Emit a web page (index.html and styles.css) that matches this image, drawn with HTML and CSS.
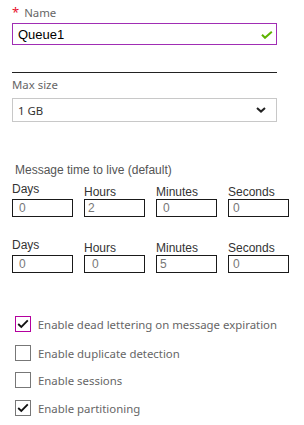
FILE: index.html
```html
<!DOCTYPE html>
<html>
<head>
<meta charset="utf-8">
<link rel="stylesheet" href="styles.css">
</head>
<body>
<div class="form">
  <div class="label name-label"><span class="req">*</span> Name</div>
  <div class="text-input valid">
    <span class="value">Queue1</span>
    <svg class="ok" width="12" height="8" viewBox="0 0 12 8"><path d="M1 3.8 L4 6.8 L10.8 0.8" fill="none" stroke="#5db300" stroke-width="2"/></svg>
  </div>
  <div class="rule"></div>

  <div class="label size-label">Max size</div>
  <div class="select">
    <span class="value">1 GB</span>
    <svg class="chev" width="10" height="6" viewBox="0 0 10 6"><path d="M1 1 L5 4.6 L9 1" fill="none" stroke="#222" stroke-width="2"/></svg>
  </div>

  <div class="ttl-title">Message time to live (default)</div>
  <div class="ttl-grid">
    <div class="cell"><div class="unit unit-high">Days</div><div class="num p6">0</div></div>
    <div class="cell"><div class="unit">Hours</div><div class="num p3">2</div></div>
    <div class="cell"><div class="unit">Minutes</div><div class="num p6">0</div></div>
    <div class="cell"><div class="unit">Seconds</div><div class="num p4">0</div></div>
  </div>
  <div class="ttl-grid second">
    <div class="cell"><div class="unit unit-high">Days</div><div class="num p6">0</div></div>
    <div class="cell"><div class="unit">Hours</div><div class="num p7">0</div></div>
    <div class="cell"><div class="unit">Minutes</div><div class="num p3">5</div></div>
    <div class="cell"><div class="unit">Seconds</div><div class="num p4">0</div></div>
  </div>

  <div class="checks">
    <div class="check"><span class="box focus"><svg width="12" height="10" viewBox="0 0 12 10"><path d="M1.2 5 L4.3 8 L10.8 1.3" fill="none" stroke="#111" stroke-width="1.8"/></svg></span><span class="ctext">Enable dead lettering on message expiration</span></div>
    <div class="check c2"><span class="box"></span><span class="ctext">Enable duplicate detection</span></div>
    <div class="check c3"><span class="box"></span><span class="ctext">Enable sessions</span></div>
    <div class="check c4"><span class="box"><svg width="12" height="10" viewBox="0 0 12 10"><path d="M1.2 5 L4.3 8 L10.8 1.3" fill="none" stroke="#111" stroke-width="1.8"/></svg></span><span class="ctext">Enable partitioning</span></div>
  </div>
</div>
</body>
</html>
```
FILE: styles.css
```css
html, body {
  margin: 0;
  padding: 0;
  background: #fff;
}
.form {
  width: 265px;
  padding: 4px 0 0 12px;
  font-family: "Noto Sans", "Open Sans", sans-serif;
  font-size: 11.4px;
  color: #666;
}
.label {
  height: 16px;
  line-height: 16px;
}
.req {
  color: #e8112d;
  font-size: 13px;
  margin-right: 2px;
}
.text-input {
  margin-top: 3px;
  height: 20px;
  border: 1px solid #a02db4;
  display: flex;
  align-items: center;
  justify-content: space-between;
  padding: 0 3px 0 5px;
  font-family: "Liberation Sans", Arial, sans-serif;
  font-size: 13px;
  color: #000;
}
.ok { margin-top: 2px; }
.rule {
  margin-top: 27px;
  height: 1px;
  background: #222;
}
.size-label {
  margin-top: 4px;
}
.select {
  margin-top: 5px;
  height: 22px;
  border: 1px solid #c8c8c8;
  display: flex;
  align-items: center;
  justify-content: space-between;
  padding: 0 10px 0 5px;
  color: #333;
}
.ttl-title {
  margin-top: 40px;
  padding-left: 3px;
  line-height: 16px;
  color: #555;
  font-family: "Liberation Sans", Arial, sans-serif;
  font-size: 12px;
}
.ttl-grid {
  display: grid;
  grid-template-columns: repeat(4, 61px);
  column-gap: 11px;
  font-family: "Liberation Sans", Arial, sans-serif;
  font-size: 12px;
}
.ttl-grid.second { margin-top: 17px; }
.cell {
  display: flex;
  flex-direction: column;
}
.unit {
  height: 14px;
  line-height: 14px;
  margin-top: 7px;
  color: #333;
}
.unit.unit-high {
  margin-top: 4px;
  margin-bottom: 3px;
}
.num {
  height: 16px;
  line-height: 16px;
  border: 1px solid #1a1a1a;
  color: #777;
}
.p3 { padding-left: 3px; }
.p4 { padding-left: 4px; }
.p6 { padding-left: 6px; }
.p7 { padding-left: 7px; }
.checks {
  margin-top: 43px;
  padding-left: 3px;
  display: flex;
  flex-direction: column;
}
.check {
  display: flex;
  align-items: center;
  height: 16px;
}
.check.c2 { margin-top: 13px; }
.check.c3 { margin-top: 11px; }
.check.c4 { margin-top: 12px; }
.box {
  width: 14px;
  height: 14px;
  border: 1px solid #777;
  display: flex;
  align-items: center;
  justify-content: center;
  margin-right: 7px;
}
.box.focus {
  border-color: #b4009e;
}
.ctext {
  color: #666;
  white-space: nowrap;
}
```
